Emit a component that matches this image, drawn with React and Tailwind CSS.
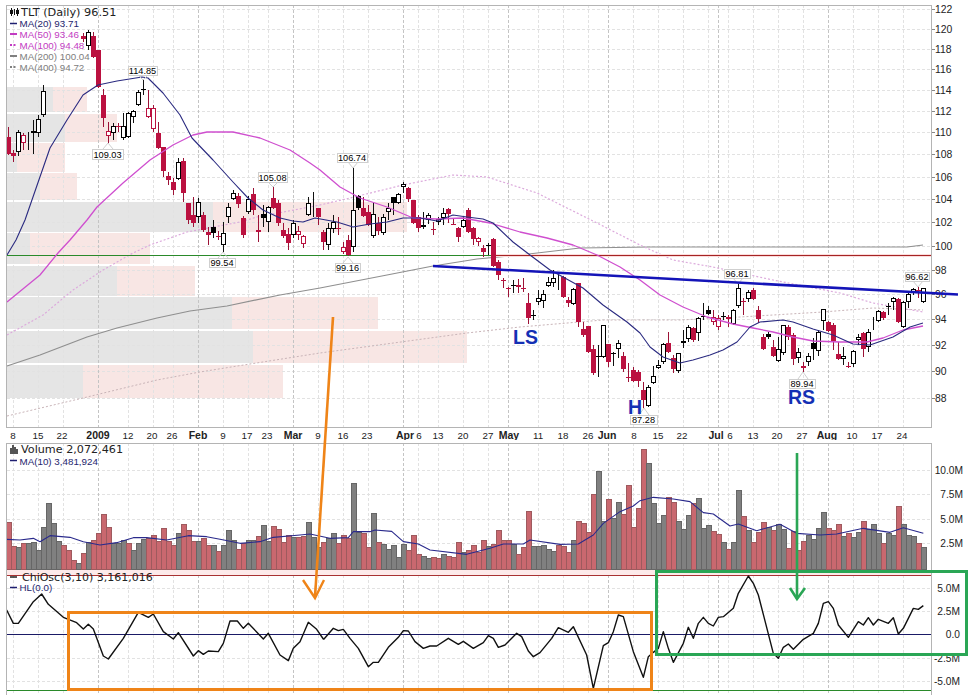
import React from "react";

const SANS = "Liberation Sans, Arial, sans-serif";
const VERD = "DejaVu Sans, Verdana, sans-serif";
const L = 6.5, R = 931.5;

const candles = [
[8,127,137,154,155,'r'],[13,150,153,156,162,'r'],[18,130,132,152,156,'w'],[23,133,135,143,150,'p'],[28,132,133,134,150,'w'],[33,120,131,133,154,'w'],[38,115,119,133,137,'w'],[43,85,91,115,117,'w'],
[83,33,36,39,42,'r'],[88,30,32,46,50,'w'],[93,32,36,57,58,'r'],[98,50,50,87,88,'r'],[103,89,95,118,127,'r'],[108,122,131,136,143,'p'],[113,123,126,133,140,'w'],[118,123,126,127,132,'r'],[123,113,126,138,140,'w'],[128,112,113,137,138,'w'],[133,110,111,117,123,'w'],[138,90,92,105,106,'w'],[143,80,89,90,95,'k'],[148,90,108,117,118,'p'],[153,105,108,129,132,'p'],[158,122,133,148,149,'r'],[163,147,147,171,177,'r'],[168,172,176,180,185,'r'],[173,178,182,190,195,'r'],[178,158,162,179,180,'w'],[183,158,161,193,202,'r'],[188,203,203,220,224,'r'],[193,197,215,223,227,'r'],[198,198,202,217,223,'w'],[203,212,215,230,232,'r'],[208,227,232,235,245,'r'],[213,220,227,233,238,'k'],[218,231,236,237,240,'r'],[223,222,233,245,252,'w'],[228,203,207,217,223,'w'],[233,190,193,199,200,'w'],[238,193,196,204,208,'r'],[243,216,218,235,238,'r'],[248,196,199,212,214,'w'],[253,188,194,210,215,'r'],[258,215,230,232,242,'p'],[263,205,214,218,227,'k'],[268,206,207,222,232,'w'],[273,187,198,208,209,'r'],[278,200,203,223,226,'r'],[283,223,230,236,238,'r'],[288,228,234,243,250,'r'],[293,220,223,235,238,'w'],[298,226,231,235,240,'p'],[303,235,236,244,248,'p'],[308,197,203,215,216,'w'],[313,192,209,210,217,'w'],[318,208,208,217,225,'r'],[323,230,232,242,250,'r'],[328,223,228,245,250,'w'],[333,215,222,229,233,'w'],[338,217,228,229,235,'r'],[343,242,247,252,254,'p'],[348,235,240,255,256,'r'],[353,168,210,247,252,'w'],[358,195,196,208,210,'k'],[363,197,208,216,217,'r'],[368,205,212,225,226,'r'],[373,202,214,236,238,'w'],[378,217,223,231,235,'r'],[383,214,217,233,235,'w'],[388,203,208,212,220,'w'],[393,197,197,203,215,'k'],[398,193,194,203,204,'w'],[403,182,184,187,193,'w'],[408,187,188,199,202,'r'],[413,200,200,223,224,'r'],[418,215,217,228,232,'r'],[423,212,225,227,229,'w'],[428,213,215,220,224,'w'],[433,222,229,230,235,'r'],[438,217,219,222,225,'w'],[443,208,213,218,225,'w'],[448,208,209,214,223,'r'],[453,218,224,225,225,'r'],[458,227,228,237,242,'r'],[463,217,220,227,228,'w'],[468,208,210,232,233,'r'],[473,227,228,239,245,'r'],[478,237,238,242,246,'p'],[483,245,248,252,257,'r'],[488,243,245,246,255,'k'],[493,238,239,266,267,'r'],[498,260,262,275,280,'r'],[503,278,280,281,288,'r'],[508,287,288,289,297,'r'],[513,280,285,286,293,'k'],[518,279,285,287,293,'r'],[523,278,288,289,292,'r'],[528,293,303,318,324,'r'],[533,310,315,316,320,'k'],[538,290,298,302,305,'w'],[543,290,294,301,308,'w'],[548,277,282,286,287,'w'],[553,270,278,283,287,'w'],[558,273,281,282,290,'w'],[563,276,277,297,298,'r'],[568,297,300,303,307,'r'],[573,288,289,304,305,'w'],[578,283,283,322,327,'r'],[583,322,329,335,337,'r'],[588,326,326,352,353,'r'],[593,345,349,373,375,'r'],[598,345,356,357,377,'k'],[603,325,325,357,358,'w'],[608,344,344,362,367,'r'],[613,352,353,354,366,'k'],[618,340,343,349,358,'w'],[623,352,356,369,372,'r'],[628,363,377,378,382,'r'],[633,367,370,381,382,'r'],[638,370,372,381,387,'r'],[643,382,390,400,408,'r'],[648,385,387,406,407,'w'],[653,366,376,383,384,'w'],[658,360,365,368,369,'w'],[663,343,344,362,364,'w'],[668,332,343,352,353,'r'],[673,355,358,369,373,'r'],[678,353,353,371,373,'w'],[683,330,341,343,348,'w'],[688,325,327,339,342,'w'],[693,327,328,340,342,'r'],[698,317,318,333,341,'w'],[703,303,316,317,320,'k'],[708,306,310,314,315,'k'],[713,310,317,322,325,'p'],[718,315,318,327,330,'p'],[723,312,316,317,320,'k'],[728,315,317,319,327,'r'],[733,309,310,324,325,'w'],[738,284,288,306,308,'w'],[743,298,301,302,315,'r'],[748,290,292,299,302,'w'],[753,288,290,299,300,'r'],[758,306,310,319,323,'r'],[763,334,337,349,350,'r'],[768,332,334,337,339,'k'],[773,340,347,356,357,'r'],[778,337,349,361,362,'w'],[783,325,325,353,355,'w'],[788,325,327,337,340,'r'],[793,333,335,359,365,'r'],[798,348,352,358,363,'w'],[803,362,366,368,372,'p'],[808,353,356,362,366,'w'],[813,338,343,349,360,'k'],[818,330,332,351,356,'w'],[823,309,309,321,330,'w'],[828,321,322,331,332,'r'],[833,323,325,341,350,'r'],[838,342,354,359,360,'r'],[843,347,356,359,365,'w'],[848,362,366,367,368,'r'],[853,350,351,364,367,'w'],[858,334,337,340,345,'w'],[863,332,333,349,357,'r'],[868,329,332,347,352,'w'],[873,317,328,329,330,'w'],[878,310,311,321,322,'w'],[883,311,312,318,320,'r'],[888,303,306,307,315,'k'],[893,297,298,302,310,'w'],[898,298,299,322,323,'r'],[903,301,302,327,328,'w'],[908,292,294,302,308,'w'],[913,288,289,293,295,'w'],[918,287,290,291,298,'r'],[923,288,288,302,303,'w'],
];

const ma20 = [[7,255],[16,240],[25,220],[50,148],[67,120],[83,95],[98,85],[117,81],[142,77],[148,78],[163,93],[180,115],[192,138],[213,160],[233,182],[248,198],[263,210],[280,218],[293,221],[303,222],[315,218],[337,222],[353,227],[370,224],[387,222],[403,218],[420,218],[437,221],[453,215],[467,217],[483,219],[493,223],[513,242],[530,255],[550,270],[563,277],[583,288],[603,305],[627,322],[640,333],[650,347],[663,357],[680,363],[693,360],[710,355],[723,350],[737,342],[750,327],[760,322],[783,320],[793,322],[813,329],[833,335],[853,344],[870,345],[893,337],[910,327],[923,323]];
const ma50 = [[7,302],[40,275],[58,253],[70,240],[87,220],[97,207],[123,183],[150,160],[173,145],[193,135],[207,132],[233,132],[260,138],[290,150],[310,163],[320,170],[340,187],[360,198],[387,207],[413,218],[437,219],[463,218],[490,223],[520,232],[547,238],[573,245],[597,255],[620,267],[640,280],[660,295],[683,307],[707,317],[733,324],[753,328],[773,332],[793,337],[813,341],[840,342],[867,342],[883,338],[903,330],[923,326]];
const ma100 = [[7,335],[43,315],[73,290],[103,270],[133,253],[150,245],[187,232],[240,222],[257,217],[320,205],[350,198],[403,185],[453,175],[487,177],[537,193],[597,223],[640,245],[673,260],[713,267],[773,280],[840,293],[873,303],[923,312]];
const ma200 = [[7,366],[40,355],[87,337],[117,328],[157,318],[190,311],[227,306],[280,295],[320,288],[387,275],[433,266],[477,259],[520,255],[580,248],[650,247],[740,247],[907,247],[923,245]];
const ma400 = [[7,416],[83,398],[157,380],[200,372],[250,364],[320,353],[467,333],[520,327],[603,320],[680,320],[740,317],[823,312],[873,308],[923,310]];

const vbp = [
[87,112,53,87],[114,142,65,117],[143,172,17,65],[173,200,40,77],[202,232,213,407],[233,264,30,150],[266,296,117,195],[297,329,232,378],[331,363,253,467],[365,398,83,283],
];

const priceTicks = [[122,9],[120,29],[118,49],[116,69],[114,90],[112,111],[110,132],[108,154],[106,177],[104,199],[102,222],[100,246],[98,270],[96,294],[94,319],[92,345],[90,371],[88,398]];

const gridX = [13,38,63,128,153,173,223,248,268,318,343,368,418,438,463,488,538,563,588,633,658,683,708,728,753,778,803,853,878,903];
const gridDark = [98,198,293,403,508,608,718,828];
const dates = [["8",13],["15",38],["22",62],["2009",98,1],["12",128],["20",152],["26",172],["Feb",198,1],["9",223],["17",247],["23",267],["Mar",293,1],["9",318],["16",343],["23",367],["Apr",405,1],["6",419],["13",438],["20",463],["27",488],["May",509,1],["11",538],["18",563],["26",588],["Jun",607,1],["8",634],["15",658],["22",682],["Jul",716,1],["6",730],["13",753],["20",777],["27",802],["Aug",827,1],["10",852],["17",877],["24",902]];

const callouts = [
["114.85",128,157,66,75,143,80],["109.03",92,123,149,159,108,143],["105.08",258,287,172,182,273,187],["99.54",209,235,258,267,223,252],["106.74",337,367,153,162,353,168],["99.16",335,360,263,272,348,257],["96.81",724,750,269,278,738,284],["89.94",789,815,379,388,803,372],["96.62",905,929,272,281,918,287],["87.28",630,657,415,424,644,408],
];

const volTops = [
[247,'r'],[318,'r'],[322,'g'],[310,'r'],[308,'g'],[306,'g'],[330,'g'],[262,'g'],[190,'g'],[250,'g'],[303,'g'],[315,'r'],[330,'r'],[360,'r'],[370,'g'],[340,'r'],[305,'g'],[300,'r'],[280,'r'],[222,'r'],[262,'r'],[308,'g'],[308,'g'],[300,'g'],[310,'r'],[330,'g'],[310,'g'],[298,'g'],[295,'r'],[285,'r'],[303,'r'],[265,'r'],[303,'r'],[315,'r'],[280,'g'],[253,'r'],[270,'r'],[303,'r'],[303,'g'],[295,'r'],[315,'r'],[315,'g'],[333,'r'],[315,'g'],[270,'g'],[300,'g'],[327,'r'],[310,'r'],[300,'g'],[300,'g'],[288,'r'],[255,'g'],[303,'g'],[258,'r'],[268,'r'],[305,'r'],[285,'r'],[290,'g'],[290,'r'],[288,'r'],[247,'g'],[290,'g'],[320,'g'],[306,'r'],
[293,'g'],[278,'g'],[308,'r'],[285,'r'],[293,'r'],[130,'g'],[275,'g'],[280,'r'],[322,'r'],[220,'g'],[307,'r'],[313,'g'],[328,'g'],[316,'g'],[352,'g'],[313,'g'],[330,'r'],[286,'r'],[343,'r'],[347,'g'],[355,'g'],[352,'r'],[355,'r'],[343,'g'],[348,'r'],[350,'r'],[307,'r'],[335,'g'],[330,'r'],[316,'r'],[335,'r'],[300,'r'],[317,'g'],[312,'r'],[270,'r'],[300,'r'],[300,'r'],[312,'g'],[343,'r'],[320,'r'],[213,'r'],[318,'g'],[318,'g'],[315,'g'],[327,'g'],[333,'g'],[315,'r'],[318,'r'],[337,'r'],[300,'g'],[243,'r'],[250,'r'],[277,'r'],[163,'r'],[93,'g'],[243,'g'],[178,'r'],[235,'g'],[186,'g'],[222,'r'],[135,'r'],[262,'r'],[205,'r'],[27,'r'],[70,'g'],
[190,'g'],[250,'g'],[226,'g'],[172,'r'],[185,'r'],[243,'g'],[267,'g'],[226,'g'],[190,'r'],[175,'g'],[265,'g'],[256,'g'],[273,'r'],[282,'r'],[307,'g'],[327,'r'],[307,'g'],[150,'g'],[229,'r'],[270,'g'],[306,'r'],[275,'r'],[247,'r'],[260,'g'],[270,'r'],[253,'g'],[268,'g'],[325,'r'],[272,'r'],[330,'r'],[303,'r'],[285,'g'],[297,'g'],[265,'g'],[217,'g'],[265,'r'],[270,'r'],[253,'r'],[288,'g'],[280,'r'],[292,'g'],[277,'g'],[244,'r'],[268,'g'],[253,'g'],[280,'g'],[310,'r'],[280,'g'],[286,'g'],[198,'r'],[253,'g'],[286,'g'],[288,'g'],[310,'r'],[322,'g'],
];

const z = (ox, arr) => arr.map(([x, y]) => [ox + x / 3, 440 + y / 3]);
const ma10 = [
  ...z(0, [[20,298],[60,300],[100,295],[120,305],[150,287],[210,292],[250,305],[300,315],[350,308],[400,293],[440,293],[500,300],[565,287],[620,290],[660,298],[720,310],[780,305],[820,292],[900,285],[930,282],[990,295]]),
  ...z(320, [[85,293],[100,275],[150,275],[165,270],[215,274],[250,305],[295,312],[330,330],[440,343],[510,325],[550,312],[610,312],[630,300],[720,313],[775,312],[820,285],[850,250],[900,215],[940,198]]),
  ...z(640, [[0,182],[40,172],[100,177],[150,185],[190,218],[220,222],[270,258],[295,252],[350,272],[420,253],[470,280],[540,285],[590,282],[670,265],[750,277],[790,263],[850,280]]),
];
const osc = [
  ...z(0, [[20,510],[40,550],[55,550],[100,485],[125,462],[145,493],[190,532],[230,548],[250,567],[265,553],[280,567],[310,648],[325,657],[370,595],[415,517],[445,532],[460,522],[490,575],[520,597],[535,578],[580,648],[595,632],[610,643],[625,633],[655,635],[670,610],[690,543],[712,543],[730,565],[745,550],[790,597],[805,580],[840,645],[865,662],[880,625],[900,605],[925,547],[950,568],[970,597]]),
  ...z(320, [[12,597],[40,565],[55,572],[70,568],[90,595],[115,625],[145,680],[160,667],[175,667],[205,622],[235,592],[250,572],[265,573],[285,605],[310,625],[330,618],[350,618],[385,595],[415,613],[430,604],[460,625],[490,608],[505,587],[520,595],[535,622],[555,615],[590,580],[605,590],[625,633],[640,650],[660,638],[695,595],[715,563],[745,577],[760,560],[800,645],[820,745],[850,617],[865,608],[880,575],[895,525],[910,530],[940,635],[970,712]]),
  ...z(640, [[10,712],[25,650],[40,637],[55,625],[70,575],[85,625],[100,667],[130,610],[145,562],[160,595],[175,550],[190,532],[205,550],[220,558],[235,532],[250,530],[280,505],[295,460],[325,408],[340,430],[355,465],[400,640],[415,655],[430,622],[445,612],[460,628],[490,598],[520,580],[535,550],[550,490],[565,485],[580,505],[595,555],[625,592],[655,545],[670,555],[685,533],[700,555],[715,538],[745,550],[760,533],[775,582],[790,565],[820,505],[835,508],[850,497]]),
];

const pts = (a) => a.map((p) => p.join(",")).join(" ");
const Line = ({ data, color, width = 1, dash }) => (
  <polyline points={pts(data)} fill="none" stroke={color} strokeWidth={width} strokeDasharray={dash} strokeLinejoin="round" />
);
const T = ({ x, y, size = 10.2, font = SANS, color = "#222", anchor = "start", bold, children }) => (
  <text x={x} y={y} fontSize={size} fontFamily={font} fill={color} textAnchor={anchor} fontWeight={bold ? 700 : 400}>{children}</text>
);
const HGrid = ({ ys }) => ys.map((y) => (
  <line key={y} x1={L} x2={R} y1={y + 0.5} y2={y + 0.5} stroke="#e2e2e2" strokeDasharray="3 2" shapeRendering="crispEdges" />
));
const VGrid = ({ y1, y2 }) => (
  <g shapeRendering="crispEdges">
    {gridX.map((x) => <line key={x} x1={x + 0.5} x2={x + 0.5} y1={y1} y2={y2} stroke="#e2e2e2" strokeDasharray="3 2" />)}
    {gridDark.map((x) => <line key={x} x1={x + 0.5} x2={x + 0.5} y1={y1} y2={y2} stroke="#c4c4c4" strokeDasharray="3 2" />)}
  </g>
);
const Key = ({ y, color, dash, width = 1.5 }) => (
  <line x1={10} x2={17} y1={y} y2={y} stroke={color} strokeWidth={width} strokeDasharray={dash} />
);

function Candle({ c }) {
  const [x0, wt, bt, bb, wb, t] = c;
  const cx = x0 + 0.5;
  const crimson = "#bb1140";
  const wick = t === "r" || t === "p" ? "#9c1236" : "#111";
  return (
    <g shapeRendering="crispEdges">
      <line x1={cx} x2={cx} y1={wt} y2={wb} stroke={wick} />
      {t === "r" && <rect x={cx - 2.5} y={bt} width={5} height={Math.max(bb - bt, 1)} fill={crimson} />}
      {t === "k" && <rect x={cx - 2.5} y={bt} width={5} height={Math.max(bb - bt, 1)} fill="#000" />}
      {t === "w" && <rect x={cx - 2} y={bt + 0.5} width={4} height={Math.max(bb - bt - 1, 0)} fill="#fff" stroke="#000" />}
      {t === "p" && <rect x={cx - 2} y={bt + 0.5} width={4} height={Math.max(bb - bt - 1, 0)} fill="#fff" stroke={crimson} />}
    </g>
  );
}

function Callout({ c }) {
  const [label, x1, x2, y1, y2, px, py] = c;
  const up = py < y1;
  const by = up ? y1 : y2;
  return (
    <g>
      <polyline points={`${px - 5},${by} ${px},${py} ${px + 5},${by}`} fill="none" stroke="#cfcfcf" />
      <rect x={x1 + 0.5} y={y1 + 0.5} width={x2 - x1} height={y2 - y1} fill="#fff" stroke="#cfcfcf" shapeRendering="crispEdges" />
      <T x={(x1 + x2) / 2} y={y2 - 1} size={9.2} anchor="middle" color="#000">{label}</T>
    </g>
  );
}

function PricePane() {
  return (
    <svg viewBox="0 0 968 440" className="block w-[968px] h-[440px] shrink-0">
      {vbp.map(([y1, y2, g, p]) => (
        <g key={y1} shapeRendering="crispEdges">
          <rect x={L} y={y1} width={g - L} height={y2 - y1} fill="#e5e5e5" />
          <rect x={g} y={y1} width={p - g} height={y2 - y1} fill="#f8e6e4" />
        </g>
      ))}
      <HGrid ys={priceTicks.map((t) => t[1])} />
      <VGrid y1={5} y2={427} />
      <Line data={ma400} color="#c9b4b8" dash="2 2" />
      <Line data={ma200} color="#8f8f8f" width={1.2} />
      <Line data={ma100} color="#dcaadc" dash="2 2" width={1.2} />
      <line x1={L} x2={493} y1={255.5} y2={255.5} stroke="#2a8a2a" shapeRendering="crispEdges" />
      <rect x={493} y={254} width={438} height={3} fill="#fbdcdc" />
      <line x1={493} x2={R} y1={255.5} y2={255.5} stroke="#a52424" shapeRendering="crispEdges" />
      {candles.map((c) => <Candle key={c[0]} c={c} />)}
      <Line data={ma50} color="#cf4fcf" width={1.3} />
      <Line data={ma20} color="#2a2a80" width={1.1} />
      {callouts.map((c) => <Callout key={c[0]} c={c} />)}
      <rect x={L} y={5.5} width={R - L} height={422} fill="none" stroke="#b4b4b4" shapeRendering="crispEdges" />
      {priceTicks.map(([v, y]) => (
        <g key={v}>
          <line x1={R} x2={R + 3} y1={y + 0.5} y2={y + 0.5} stroke="#888" shapeRendering="crispEdges" />
          <T x={935} y={y + 4} size={10.4}>{v}</T>
        </g>
      ))}
      {dates.map(([d, x, b], i) => (
        <T key={i} x={x} y={439} anchor="middle" size={b ? 10.5 : 9.8} bold={b}>{d}</T>
      ))}
      <g stroke="#111" shapeRendering="crispEdges">
        <line x1={11} x2={11} y1={8} y2={16} />
        <line x1={14} x2={14} y1={9} y2={15} />
        <line x1={17} x2={17} y1={8} y2={16} />
      </g>
      <g fill="#111" shapeRendering="crispEdges">
        <rect x={10} y={10} width={3} height={4} />
        <rect x={16} y={10} width={3} height={4} />
      </g>
      <T x={21} y={16} size={11.3} font={VERD}>TLT (Daily) 96.51</T>
      <Key y={23.5} color="#1f1f70" />
      <T x={19.5} y={27} size={9.8} color="#26266e">MA(20) 93.71</T>
      <Key y={34} color="#c23cc2" width={2} />
      <T x={19.5} y={38} size={9.8} color="#c23cc2">MA(50) 93.46</T>
      <Key y={45} color="#c23cc2" width={2} dash="2 1.5" />
      <T x={19.5} y={49} size={9.8} color="#c23cc2">MA(100) 94.48</T>
      <Key y={56} color="#808080" width={2} />
      <T x={19.5} y={60} size={9.8} color="#808080">MA(200) 100.04</T>
      <Key y={67} color="#808080" width={2} dash="2 1.5" />
      <T x={19.5} y={71} size={9.8} color="#808080">MA(400) 94.72</T>
    </svg>
  );
}

function VolumePane() {
  return (
    <svg viewBox="0 440 968 130" className="block w-[968px] h-[130px] shrink-0">
      <HGrid ys={[470, 494, 519, 543]} />
      <VGrid y1={443} y2={570} />
      {volTops.map(([t, k], i) => {
        const top = Math.round(440 + t / 3);
        return (
          <rect key={i} x={6.5 + 5 * i} y={top + 0.5} width={5} height={569 - top}
            fill={k === "r" ? "#c9686f" : "#808080"} stroke={k === "r" ? "#9e5a5e" : "#666"} shapeRendering="crispEdges" />
        );
      })}
      <Line data={ma10} color="#2a2a8c" width={1.1} />
      <line x1={L} x2={R} y1={443.5} y2={443.5} stroke="#b4b4b4" shapeRendering="crispEdges" />
      <line x1={L} x2={L} y1={443} y2={570} stroke="#b4b4b4" shapeRendering="crispEdges" />
      <line x1={R} x2={R} y1={443} y2={570} stroke="#b4b4b4" shapeRendering="crispEdges" />
      {[["10.0M", 470], ["7.5M", 494], ["5.0M", 519], ["2.5M", 543]].map(([l, y]) => (
        <T key={l} x={963} y={y + 4} anchor="end">{l}</T>
      ))}
      <g fill="#555" shapeRendering="crispEdges">
        <rect x={10} y={448} width={1.5} height={6} />
        <rect x={12} y={445} width={1.5} height={9} />
        <rect x={14} y={447} width={1.5} height={7} />
        <rect x={16} y={449} width={1.5} height={5} />
      </g>
      <T x={21} y={453} size={11.2} font={VERD}>Volume 2,072,461</T>
      <Key y={460.5} color="#1f1f70" />
      <T x={19.5} y={464.5} size={9.8} color="#26266e">MA(10) 3,481,924</T>
    </svg>
  );
}

function OscPane() {
  return (
    <svg viewBox="0 570 968 125" className="block w-[968px] h-[125px] shrink-0">
      <rect x={L} y={570} width={R - L} height={5} fill="#fdeaea" />
      <HGrid ys={[588, 611, 658, 681]} />
      <VGrid y1={575} y2={695} />
      <line x1={L} x2={R} y1={575.5} y2={575.5} stroke="#a83232" shapeRendering="crispEdges" />
      <line x1={L} x2={R} y1={634.5} y2={634.5} stroke="#1a1a66" shapeRendering="crispEdges" />
      <line x1={L} x2={R} y1={690.5} y2={690.5} stroke="#2a8a2a" shapeRendering="crispEdges" />
      <Line data={osc} color="#111" width={1.4} />
      <line x1={L} x2={L} y1={570} y2={695} stroke="#b4b4b4" shapeRendering="crispEdges" />
      <line x1={R} x2={R} y1={570} y2={695} stroke="#b4b4b4" shapeRendering="crispEdges" />
      {[["5.0M", 588], ["2.5M", 611], ["0.0", 634], ["-2.5M", 658], ["-5.0M", 681]].map(([l, y]) => (
        <T key={l} x={960} y={y + 4} anchor="end">{l}</T>
      ))}
      <line x1={10} x2={17} y1={577} y2={577} stroke="#222" strokeWidth={1.5} />
      <T x={22} y={581} size={11} font={VERD}>ChiOsc(3,10) 3,161,016</T>
      <Key y={587.5} color="#1f1f70" />
      <T x={19.5} y={591} size={9.8} color="#26266e">HL(0.0)</T>
    </svg>
  );
}

function Annotations() {
  const orange = "#ef8418";
  const green = "#2aa655";
  const blue = "#1414b8";
  return (
    <svg viewBox="0 0 968 695" className="absolute inset-0 w-[968px] h-[695px] pointer-events-none">
      <line x1={433} y1={266} x2={958} y2={294.5} stroke={blue} strokeWidth={2.6} />
      <line x1={333} y1={317} x2={315} y2={597} stroke={orange} strokeWidth={2.6} />
      <polyline points="303,580 315,598 324,580" fill="none" stroke={orange} strokeWidth={2.4} />
      <rect x={68.5} y={612.5} width={583} height={77} fill="none" stroke={orange} strokeWidth={3} />
      <line x1={797} y1={453} x2={797} y2={599} stroke={green} strokeWidth={2.6} />
      <polyline points="790,588 797,599 805,588" fill="none" stroke={green} strokeWidth={2.6} />
      <rect x={656.5} y={571.5} width={310} height={83} fill="none" stroke={green} strokeWidth={3} />
      <T x={513} y={344} size={19.5} bold color="#1430b4">LS</T>
      <T x={628} y={414} size={19.5} bold color="#1430b4">H</T>
      <T x={788} y={404} size={19.5} bold color="#1430b4">RS</T>
    </svg>
  );
}

export default function App() {
  return (
    <div className="relative flex flex-col w-[968px] h-[695px] overflow-hidden bg-white">
      <PricePane />
      <VolumePane />
      <OscPane />
      <Annotations />
    </div>
  );
}
